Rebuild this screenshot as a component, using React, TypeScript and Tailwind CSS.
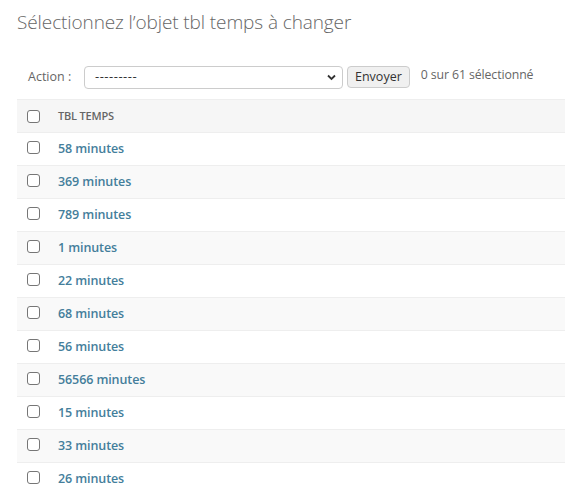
import React from "react";

const rows = [58, 369, 789, 1, 22, 68, 56, 56566, 15, 33, 26];

function Box() {
  return (
    <span className="block w-[13px] h-[13px] rounded-[3px] border border-[#767676] bg-white" />
  );
}

export default function App() {
  return (
    <div
      className="w-[565px] h-[493px] overflow-hidden bg-white text-[#333]"
      style={{ fontFamily: '"Open Sans", "Noto Sans", sans-serif' }}
    >
      <h1 className="pl-[17px] pt-[8px] h-[55px] text-[19px] font-light text-[#666] tracking-[-0.1px]">
        Sélectionnez l’objet tbl temps à changer
      </h1>

      <div className="ml-[17px] h-[44px] flex items-center text-[12.5px] text-[#666]">
        <span className="ml-[11px] w-[56px]">Action :</span>
        <div className="relative w-[259px] h-[23px] border border-[#ccc] rounded-[4px] bg-white flex items-center">
          <span className="pl-[10px] text-[13px] text-[#333] tracking-[0.5px]">---------</span>
          <svg className="absolute right-[6px] top-[7px]" width="9" height="7" viewBox="0 0 9 7">
            <path d="M1 1.5 L4.5 5 L8 1.5" fill="none" stroke="#333" strokeWidth="1.8" />
          </svg>
        </div>
        <button className="ml-[4px] h-[22px] px-[7px] border border-[#ccc] rounded-[4px] bg-[#f0f0f0] text-[12.5px] text-[#333] leading-none">
          Envoyer
        </button>
        <span className="ml-[11px] -mt-[4px] text-[12.3px] text-[#666] tracking-[-0.1px]">0 sur 61 sélectionné</span>
      </div>

      <div className="ml-[17px]">
        <div className="h-[34px] flex items-center bg-[#f6f6f6] border-t border-b border-[#eee]">
          <span className="ml-[10px]"><Box /></span>
          <span className="ml-[18px] mt-[1px] text-[11px] font-semibold text-[#666] tracking-[-0.2px]">TBL TEMPS</span>
        </div>
        {rows.map((n, i) => (
          <div
            key={i}
            className={`h-[33px] flex items-center border-b border-[#eee] ${i % 2 === 1 ? "bg-[#f9f9f9]" : "bg-white"}`}
          >
            <span className="ml-[10px] -mt-[4px]"><Box /></span>
            <span className="ml-[18px] mt-[1px] text-[12.5px] font-semibold text-[#447e9b] tracking-[-0.1px]">{n} minutes</span>
          </div>
        ))}
      </div>
    </div>
  );
}
